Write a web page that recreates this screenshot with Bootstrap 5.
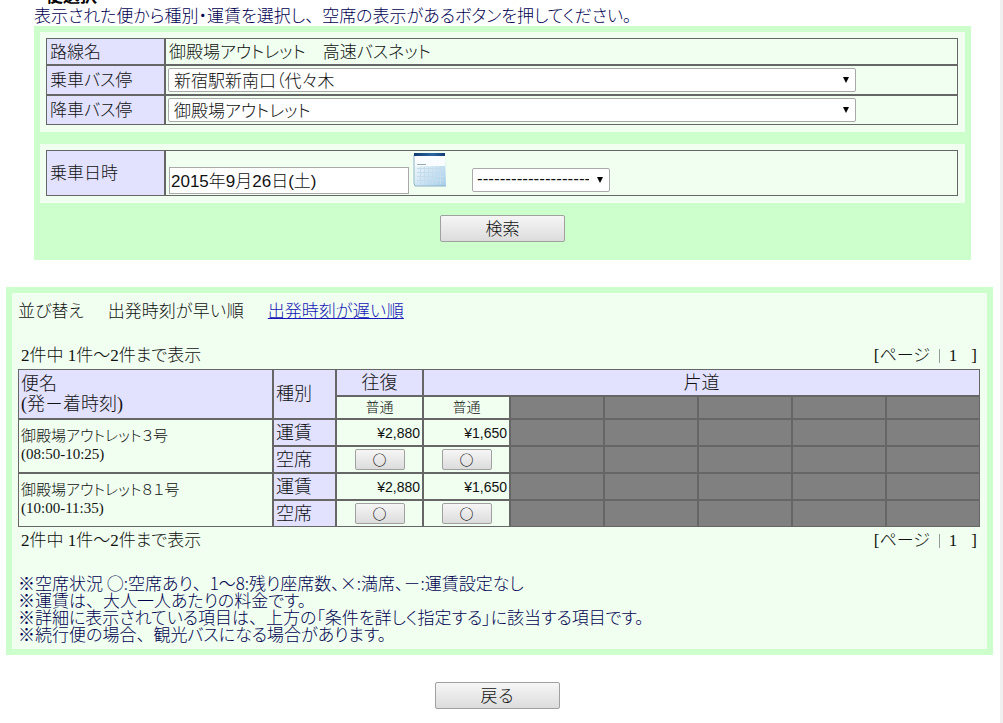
<!DOCTYPE html>
<html lang="ja">
<head>
<meta charset="utf-8">
<meta name="viewport" content="width=device-width, initial-scale=1">
<title>便選択</title>
<link href="https://cdn.jsdelivr.net/npm/bootstrap@5.3.0/dist/css/bootstrap.min.css" rel="stylesheet">
<style>
:root { --line: #666; --mint: #cfc; --pale: #f0fff0; --lilac: #e2e2ff; --navy: #000050; }
body {
  font-family: "Liberation Serif", "Noto Sans CJK JP", sans-serif;
  font-feature-settings: "palt";
  font-size: 17px; font-weight: 300; line-height: 22px; color: #111;
  border-right: 3px solid #f0f0f0; overflow-x: hidden;
}
.gothic { font-family: "Noto Sans CJK JP", sans-serif; }
.page-body { padding: 0 7px 0 6px; overflow: hidden; }
.page-title { font-size: 17px; line-height: 20px; margin: -15px 0 0 40px; color: #000; }
.lead-in { color: var(--navy); margin: 0 28px; height: 21px; line-height: 20px; }
.full { font-feature-settings: normal; }
.centred { font-family: "Noto Sans CJK TC", sans-serif; }

/* search form */
.search-panel { background: var(--mint); margin: 0 22px 0 28px; padding: 6px 6px 18px; }
.search-block { background: var(--pale); padding: 6px 7px 7px 6px; }
.search-block + .search-block { margin-top: 12px; }
.submit-bar { padding-top: 12px; line-height: 0; }
.lined { width: 100%; border-collapse: separate; border-spacing: 0; table-layout: fixed; }
.lined th, .lined td { border: 1px solid var(--line); padding: 0 2px; font-size: 18px; font-weight: 300; height: 27px; line-height: 20px; }
.lined th { background: var(--lilac); }
.search-block th, .search-block td { font-size: 17px; }
.search-block th { width: 119px; padding: 0 3px 2px; }
.search-block td.route { padding: 0 3px 2px; }
.search-block tr + tr > * { height: 30px; }
.search-block .date-row > * { height: 46px; }
.pick {
  appearance: none; display: block; height: 24px; padding: 0 20px 1px 5px; color: #111;
  font-family: "Noto Sans CJK JP", sans-serif; font-size: 17px; font-weight: 300; line-height: 20px;
  font-feature-settings: "palt";
  border: 1px solid #a9a9a9; border-radius: 2px;
  background: #fff url("data:image/svg+xml,%3Csvg xmlns='http://www.w3.org/2000/svg' width='6' height='6'%3E%3Cpath d='M0 0H6L3 6Z'/%3E%3C/svg%3E") no-repeat right 6px center;
}
.pick-stop { width: calc(100% - 99px); }
.pick-time { width: 138px; padding-left: 4px; margin-bottom: 2px; font-family: "Liberation Sans", sans-serif; }
.date-box {
  width: 240px; height: 27px; margin-left: 1px; padding: 0 1px 2px; border: 1px solid #a9a9a9; background: #fff; color: #111;
  font-family: "Liberation Sans", "Noto Sans CJK JP", sans-serif; font-size: 17px; font-weight: 300;
}
.cal { margin: 0 25px 7px 4px; }
.plain-btn {
  width: 125px; height: 27px; padding: 0 0 2px; font-size: 17px; line-height: 20px; color: #111;
  font-family: "Noto Sans CJK JP", sans-serif; font-weight: 300;
  border: 1px solid #a0a0a0; border-radius: 2px; background: linear-gradient(#f6f6f6, #dcdcdc);
}

/* results */
.result-panel { border: 6px solid var(--mint); background: var(--pale); margin-top: 27px; padding: 5px 7px 7px 6px; }
.sort-bar { padding-bottom: 23px; line-height: 24px; }
.sort-bar span { margin-right: 24px; }
.sort-bar a { color: #1414b8; }
.count-bar { padding: 0 3px; line-height: 22px; height: 24px; }
.lined + .count-bar { padding-top: 3px; height: 25px; }
.c-trip { width: 255px; } .c-kind { width: 63px; } .c-fare { width: 87px; }
.lined .small-cell { font-size: 14px; height: 23px; }
.lined .void { background: #808080; }
.lined .fare { font-family: "Liberation Sans", sans-serif; font-size: 14px; text-align: right; }
.lined .seat { text-align: center; line-height: 0; }
.seat-btn { width: 50px; height: 21px; font-size: 14px; line-height: 0; font-weight: 700; }
.trip { font-size: 15px; line-height: 18px; padding-bottom: 2px; }
.pager i { display: inline-block; width: 1px; height: 14px; background: #999; margin: 0 9px; vertical-align: -2px; }
.pager b { display: inline-block; width: 14px; }
.notes { padding-top: 22px; color: var(--navy); line-height: 17px; }
.notes p { margin: 0; }
.back-bar { padding: 27px 4px 13px 0; line-height: 0; }
</style>
</head>
<body class="min-vh-100">
<main class="page-body">
  <h1 class="page-title gothic fw-bold">便選択</h1>
  <p class="lead-in gothic">表示された便から種別・運賃を選択し<span class="full centred">、</span>空席の表示があるボタンを押してください<span class="full centred">。</span></p>

  <form class="search-panel" onsubmit="return false">
    <div class="search-block">
      <table class="lined gothic">
        <tr><th scope="row">路線名</th><td class="route">御殿場アウトレット　高速バスネット</td></tr>
        <tr><th scope="row"><label for="from">乗車バス停</label></th>
          <td><select id="from" class="pick pick-stop"><option>新宿駅新南口（代々木</option></select></td></tr>
        <tr><th scope="row"><label for="to">降車バス停</label></th>
          <td><select id="to" class="pick pick-stop"><option>御殿場アウトレット</option></select></td></tr>
      </table>
    </div>
    <div class="search-block">
      <table class="lined gothic">
        <tr class="date-row"><th scope="row"><label for="date">乗車日時</label></th>
          <td>
            <div class="d-flex align-items-end">
              <input id="date" class="date-box" type="text" value="2015年9月26日(土)">
              <svg class="cal" width="34" height="34" viewBox="0 0 34 34" role="img" aria-label="カレンダー">
                <defs><linearGradient id="sky" x2="1" y2="1"><stop stop-color="#fff"/><stop offset="1" stop-color="#a4cdea"/></linearGradient>
                <linearGradient id="bar"><stop stop-color="#123a70"/><stop offset=".6" stop-color="#2e68a4"/><stop offset="1" stop-color="#123a70"/></linearGradient></defs>
                <path d="M1 2H32L33 33H2Z" fill="url(#sky)"/>
                <path d="M1 2V30L2 33H33" fill="none" stroke="#8fb2c8"/>
                <path d="M1 0H32V3H1Z" fill="url(#bar)"/>
                <path d="M2 3H32V13H2Z" fill="#fafdff"/>
                <path d="M4 11.500H13" stroke="#98abb4"/>
                <path d="M4 15.500H31M4 19.500H31M4 23.500H31M4 27.500H31M7.500 14V31M11.500 14V31M15.500 14V31M19.500 14V31M23.500 14V31M27.500 14V31" stroke="#c4dcec" fill="none"/>
              </svg>
              <select class="pick pick-time" aria-label="時刻"><option>--------------------</option></select>
            </div>
          </td></tr>
      </table>
    </div>
    <div class="submit-bar text-center"><button class="plain-btn" type="submit">検索</button></div>
  </form>

  <section class="result-panel">
    <div class="sort-bar gothic d-flex">
      <span>並び替え</span><span class="full">出発時刻が早い順</span><a class="full" href="#">出発時刻が遅い順</a>
    </div>
    <div class="count-bar d-flex justify-content-between"><span>2件中 1件～2件まで表示</span><span class="pager">[ページ<i></i>1<b></b>]</span></div>
    <table class="lined">
      <colgroup><col class="c-trip"><col class="c-kind"><col class="c-fare"><col class="c-fare"><col><col><col><col><col></colgroup>
      <thead>
        <tr><th rowspan="2" scope="col">便名<br>(発－着時刻)</th><th rowspan="2" scope="col">種別</th><th class="text-center" scope="col">往復</th><th class="text-center" colspan="6" scope="colgroup">片道</th></tr>
        <tr><td class="small-cell text-center">普通</td><td class="small-cell text-center">普通</td><td class="void small-cell"></td><td class="void small-cell"></td><td class="void small-cell"></td><td class="void small-cell"></td><td class="void small-cell"></td></tr>
      </thead>
      <tbody>
        <tr><td rowspan="2"><div class="trip">御殿場アウトレット３号<br>(08:50-10:25)</div></td><th scope="row">運賃</th><td class="fare">¥2,880</td><td class="fare">¥1,650</td><td class="void"></td><td class="void"></td><td class="void"></td><td class="void"></td><td class="void"></td></tr>
        <tr><th scope="row">空席</th><td class="seat"><button class="plain-btn seat-btn" type="button">○</button></td><td class="seat"><button class="plain-btn seat-btn" type="button">○</button></td><td class="void"></td><td class="void"></td><td class="void"></td><td class="void"></td><td class="void"></td></tr>
        <tr><td rowspan="2"><div class="trip">御殿場アウトレット８１号<br>(10:00-11:35)</div></td><th scope="row">運賃</th><td class="fare">¥2,880</td><td class="fare">¥1,650</td><td class="void"></td><td class="void"></td><td class="void"></td><td class="void"></td><td class="void"></td></tr>
        <tr><th scope="row">空席</th><td class="seat"><button class="plain-btn seat-btn" type="button">○</button></td><td class="seat"><button class="plain-btn seat-btn" type="button">○</button></td><td class="void"></td><td class="void"></td><td class="void"></td><td class="void"></td><td class="void"></td></tr>
      </tbody>
    </table>
    <div class="count-bar d-flex justify-content-between"><span>2件中 1件～2件まで表示</span><span class="pager">[ページ<i></i>1<b></b>]</span></div>
    <div class="notes gothic">
      <p>※空席状況 ○:空席あり<span class="full">、</span>1～8:残り座席数、×:満席、－:運賃設定なし</p>
      <p>※運賃は<span class="full">、</span>大人一人あたりの料金です。</p>
      <p>※詳細に表示されている項目は<span class="full">、</span>上方の「条件を詳しく指定する」に該当する項目です。</p>
      <p>※続行便の場合<span class="full">、</span>観光バスになる場合があります。</p>
    </div>
  </section>
  <div class="back-bar text-center"><button class="plain-btn" type="button">戻る</button></div>
</main>
<script src="https://cdn.jsdelivr.net/npm/bootstrap@5.3.0/dist/js/bootstrap.bundle.min.js"></script>
</body>
</html>
